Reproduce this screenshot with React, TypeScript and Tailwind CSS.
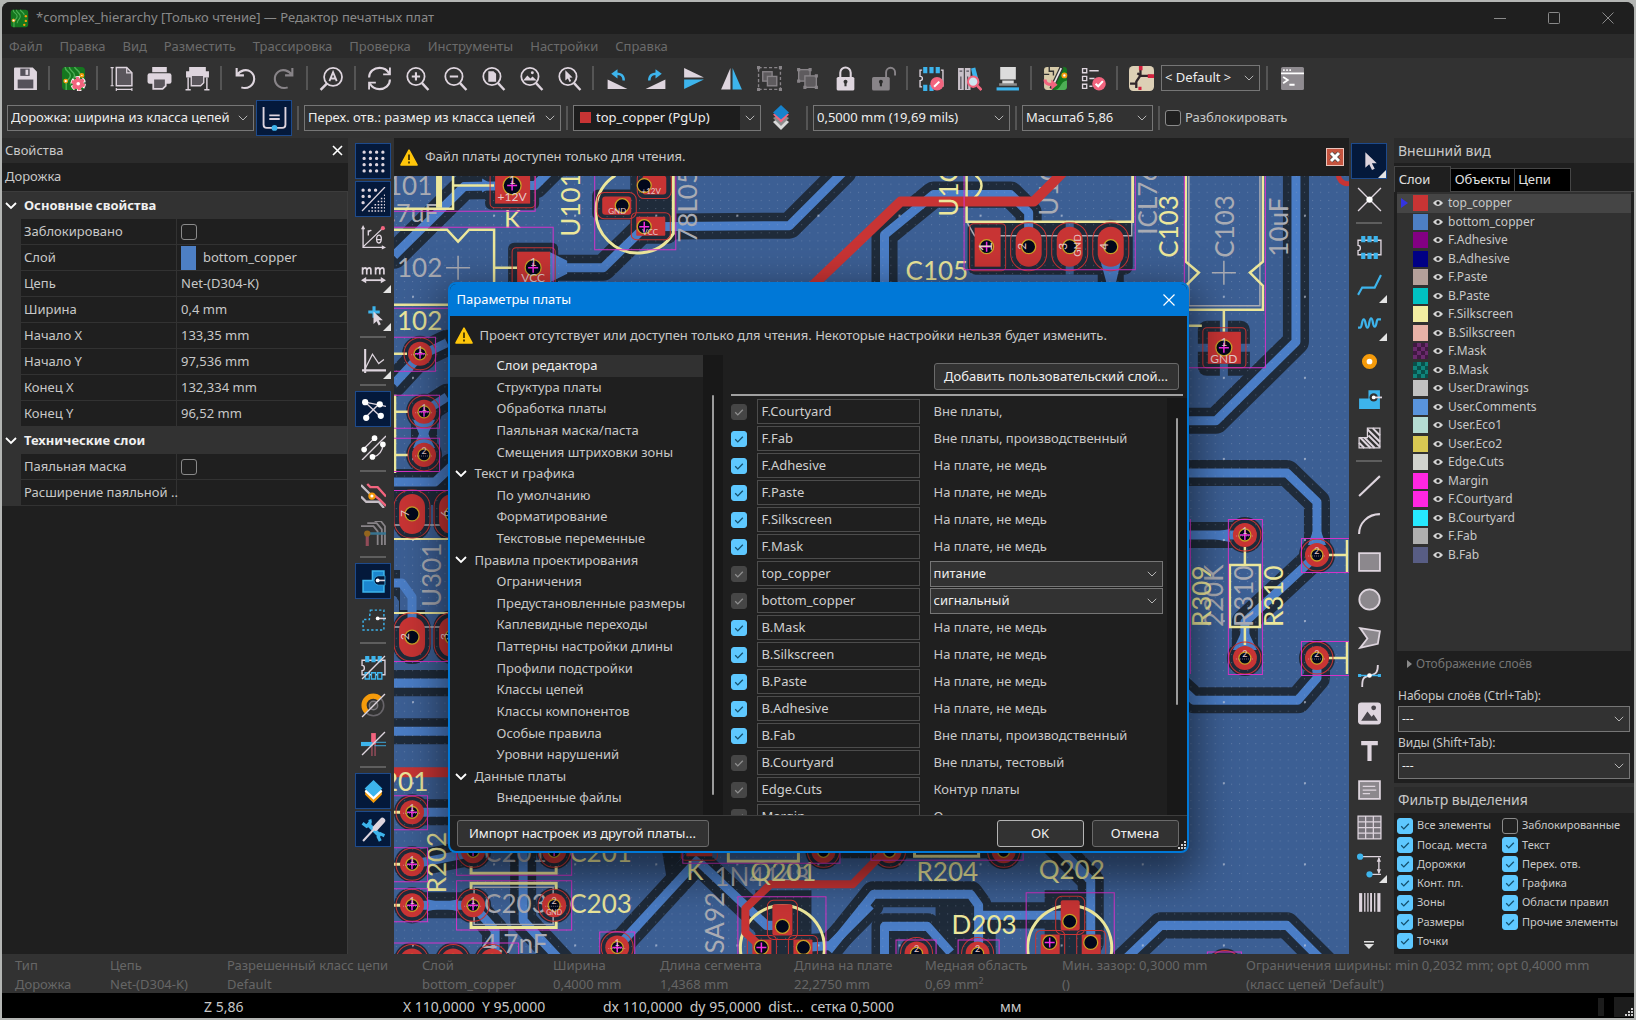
import { useId } from "react";
import type { ReactNode } from "react";

const LIGHT = "#ded5de";
const BLUE = "#3db4ec";
const PINK = "#f2647e";
const ORANGE = "#f59b0b";

/* ---------- controls ---------- */

const Check = ({ label, on, disabled, className = "", hideLabel }: {
  label: string; on?: boolean; disabled?: boolean; className?: string; hideLabel?: boolean;
}) => {
  const id = useId();
  return (
    <span className={`flex items-center gap-1 ${className}`}>
      <span className="relative block h-4 w-4 shrink-0">
        <input
          id={id}
          type="checkbox"
          defaultChecked={on}
          disabled={disabled}
          aria-label={hideLabel ? label : undefined}
          className="block h-4 w-4 appearance-none rounded-[3px] border border-[#8a8a8a] bg-[#202020] checked:border-[#5ec8ff] checked:bg-[#5ec8ff] disabled:border-[#464646] disabled:bg-[#464646]"
        />
        {on && (
          <svg viewBox="0 0 16 16" className="pointer-events-none absolute inset-0 h-4 w-4" fill="none" stroke={disabled ? "#8f8f8f" : "#14506e"} strokeWidth="1.3">
            <path d="M4.2 8.3l2.6 2.6 5-5.2" />
          </svg>
        )}
      </span>
      {!hideLabel && <label htmlFor={id} className="whitespace-nowrap">{label}</label>}
    </span>
  );
};

const Select = ({ value, label, className = "", dark }: { value: string; label: string; className?: string; dark?: boolean }) => (
  <span className={`relative block h-[26px] shrink-0 border border-[#767676] ${className}`}>
    <select aria-label={label} className={`block h-full w-full appearance-none text-[#eeeeee] outline-none ${dark ? "bg-[#1d1d1d] pl-[22px]" : "bg-[#323232] pl-[3px]"}`}>
      <option>{value}</option>
    </select>
    {dark && <i className="pointer-events-none absolute top-[6px] left-[6px] h-[11px] w-[11px] bg-[#c83434]" />}
    <span className={`pointer-events-none absolute inset-y-0 right-0 flex w-[20px] items-center justify-center ${dark ? "bg-[#323232]" : ""}`}>
      <svg width="10" height="6" viewBox="0 0 10 6" fill="none" stroke="#b5b5b5"><path d="M.8.8L5 5 9.2.8" /></svg>
    </span>
  </span>
);

const Tool = ({ name, active, corner, children, dim }: { name: string; active?: boolean; corner?: boolean; dim?: boolean; children: ReactNode }) => (
  <button
    type="button"
    aria-label={name}
    className={`relative flex h-9 w-9 shrink-0 items-center justify-center ${active ? "border border-[#1d4a8c] bg-[#04193b]" : ""}`}
  >
    <svg width="25" height="25" viewBox="0 0 24 24" fill="none" stroke={LIGHT} strokeWidth="1.7" opacity={dim ? 0.5 : 1}>{children}</svg>
    {corner && <svg width="8" height="8" viewBox="0 0 8 8" className="absolute right-0 bottom-0" fill="#e4e4e4"><path d="M8 0v8H0z" /></svg>}
  </button>
);

const VSep = ({ className = "" }: { className?: string }) => <i className={`h-6 w-[2px] shrink-0 bg-[#555] ${className}`} />;
const HSep = () => <i className="my-[3px] h-[2px] w-[26px] shrink-0 bg-[#5e5e5e]" />;

const Warn = () => (
  <svg width="18" height="17" viewBox="0 0 18 17" className="shrink-0">
    <path d="M9 1.2L17 16H1z" fill="#ffc60a" stroke="#ffc60a" strokeWidth="1.6" strokeLinejoin="round" />
    <path d="M9 5.6v5.4M9 12.6v1.8" stroke="#3b2d00" strokeWidth="1.7" />
  </svg>
);

/* ---------- toolbars ---------- */

const Lens = ({ children }: { children?: ReactNode }) => (
  <>
    <circle cx="10.5" cy="10" r="8.3" />
    <path d="M16.4 16.4L22.5 23" strokeWidth="2.3" />
    {children}
  </>
);

const BoardArt = () => (
  <>
    <rect x="1" y="1" width="22" height="22" rx="3.5" fill="#15771f" stroke="none" />
    <path d="M4 1c0 5 5 4 5 8s-4 4-4 8v6M8 1c0 4 5 4 5 8s-4 5-4 9M13 1c1 3 5 3 5 7" stroke="#4dae55" strokeWidth="1.4" />
    <circle cx="4.5" cy="14.5" r="1.7" fill="#fff" stroke={ORANGE} strokeWidth="1.2" />
  </>
);

const Badge = ({ d }: { d: string }) => (
  <>
    <circle cx="17.3" cy="17" r="6.5" fill={PINK} stroke="none" />
    <path d={d} stroke="#fff" strokeWidth="2" />
  </>
);

const MainToolbar = () => (
  <div className="flex h-10 shrink-0 items-center gap-[2px] bg-[#323232] pl-[5px]">
    <Tool name="Сохранить">
      <path d="M2 1.5h17l4 4V23H1V2.5a1 1 0 0 1 1-1z" fill={LIGHT} stroke="none" />
      <rect x="7" y="2.5" width="9" height="7" fill="#55515a" stroke="none" /><rect x="12" y="3.5" width="2.6" height="5" fill={LIGHT} stroke="none" />
      <rect x="4.5" y="13" width="15" height="8.5" fill="#55515a" stroke="none" />
    </Tool>
    <VSep className="mx-[3px]" />
    <Tool name="Параметры платы">
      <BoardArt />
      <circle cx="20" cy="9" r="1.5" fill="#fff" stroke={ORANGE} />
      <circle cx="16.5" cy="17" r="5.3" fill={PINK} stroke="#fff" strokeWidth="4.2" strokeDasharray="3.6 1.95" />
      <circle cx="16.5" cy="17" r="5.3" fill={PINK} stroke={PINK} strokeWidth="2.6" strokeDasharray="2.8 2.75" />
      <circle cx="16.5" cy="17" r="2.6" fill="#fff" stroke={PINK} />
    </Tool>
    <VSep className="mx-[3px]" />
    <Tool name="Параметры страницы">
      <path d="M7 1.5h10l5 5V19H7z" fill="#5a565c" strokeWidth="1.4" /><path d="M17 1.5v5h5" strokeWidth="1.2" />
      <path d="M3 1.5V19M1.5 1.5h3M1.5 19h3M7 22.5h15M7 21v3M22 21v3" strokeWidth="1.1" />
    </Tool>
    <Tool name="Печать">
      <path d="M5 1h14v5H5z" fill={LIGHT} stroke="none" />
      <rect x="0.5" y="7" width="23" height="10" rx="2" fill={LIGHT} stroke="none" />
      <path d="M6 12h12v7l-3 3H6z" fill="#5a565c" />
    </Tool>
    <Tool name="Плоттер">
      <path d="M4 1h16v4H4zM1 5h22v6H1z" fill={LIGHT} stroke="none" />
      <path d="M6 9h12v7l-3 3H6z" fill="#5a565c" strokeWidth="1.3" /><path d="M3 11v12M21 11v12M.5 22.8h5M18.5 22.8h5" strokeWidth="1.4" />
    </Tool>
    <VSep className="mx-[3px]" />
    <Tool name="Отменить"><path d="M3.5 2v7h7M4 8.5C7 4 13 2.5 17 5.5c5 4 4 11-.5 14-3 2-6 2-8.5 1" strokeWidth="2" /></Tool>
    <Tool name="Повторить" dim><path d="M20.5 2v7h-7M20 8.5C17 4 11 2.5 7 5.5c-5 4-4 11 .5 14 3 2 6 2 8.5 1" strokeWidth="2" /></Tool>
    <VSep className="mx-[3px]" />
    <Tool name="Найти">
      <circle cx="13.5" cy="10.5" r="8.6" /><path d="M7.5 17L1.5 23" strokeWidth="2.3" />
      <path d="M10 14.5l3.5-8.5 3.5 8.5M11.2 12h4.6" strokeWidth="1.8" />
    </Tool>
    <VSep className="mx-[3px]" />
    <Tool name="Обновить">
      <path d="M2 11C2 5 7 1.8 12 1.8c4 0 7.5 2 9.3 5.5M22 13c0 6-5 9.2-10 9.2-4 0-7.5-2-9.3-5.5" strokeWidth="2" />
      <path d="M22 1.5v6.5h-6.5M2 22.5V16h6.5" strokeWidth="1.8" />
    </Tool>
    <Tool name="Приблизить"><Lens><path d="M10.5 6v8M6.5 10h8" strokeWidth="2" /></Lens></Tool>
    <Tool name="Отдалить"><Lens><path d="M6.5 10h8" strokeWidth="2" /></Lens></Tool>
    <Tool name="По размеру страницы"><Lens><path d="M7 5h5l2.5 2.5V15H7z" fill={LIGHT} stroke="none" /></Lens></Tool>
    <Tool name="По объектам"><Lens><path d="M4 14l4-5 3 3 2-2 4 4z" fill={LIGHT} stroke="none" /><circle cx="12.8" cy="6.5" r="1.4" fill={LIGHT} stroke="none" /></Lens></Tool>
    <Tool name="По выделению"><Lens><path d="M8 4v10l2.4-2 1.6 3.3 1.6-.8-1.6-3.2 3-.3z" fill={LIGHT} stroke="none" /></Lens></Tool>
    <VSep className="mx-[3px]" />
    <Tool name="Повернуть влево">
      <path d="M2.5 13v9h19z" fill={LIGHT} stroke="none" /><path d="M18 14c0-5-3-7-8-6.5" stroke={BLUE} strokeWidth="2.4" /><path d="M12 3v9L6 7.5z" fill={BLUE} stroke="none" />
    </Tool>
    <Tool name="Повернуть вправо">
      <path d="M21.5 13v9h-19z" fill={LIGHT} stroke="none" /><path d="M6 14c0-5 3-7 8-6.5" stroke={BLUE} strokeWidth="2.4" /><path d="M12 3v9l6-4.5z" fill={BLUE} stroke="none" />
    </Tool>
    <Tool name="Отразить по вертикали"><path d="M3 2l19 9H3z" fill={LIGHT} stroke="none" /><path d="M3 22l19-9H3z" fill={BLUE} stroke="none" /></Tool>
    <Tool name="Отразить по горизонтали"><path d="M2 22.5L11 2v20.5z" fill={LIGHT} stroke="none" /><path d="M22 22.5L13 2v20.5z" fill={BLUE} stroke="none" /></Tool>
    <Tool name="Сгруппировать" dim>
      <rect x="1.5" y="1.5" width="21" height="21" strokeDasharray="3 2" strokeWidth="1.3" />
      <rect x="5.5" y="5.5" width="9" height="9" fill="#8a858a" strokeWidth="1.3" /><rect x="10" y="10" width="9" height="9" fill="#8a858a" strokeWidth="1.3" />
      <path d="M0 0h3v3H0zM21 0h3v3h-3zM0 21h3v3H0zM21 21h3v3h-3z" fill={LIGHT} stroke="none" />
    </Tool>
    <Tool name="Разгруппировать" dim>
      <rect x="3.5" y="3.5" width="11" height="11" fill="#8a858a" strokeWidth="1.3" /><rect x="9.5" y="9.5" width="11" height="11" fill="#8a858a" strokeWidth="1.3" />
      <path d="M2 2h3v3H2zM13 2h3v3h-3zM2 13h3v3H2zM19 8h3v3h-3zM8 19h3v3H8zM19 19h3v3h-3z" fill={LIGHT} stroke="none" />
    </Tool>
    <Tool name="Заблокировать">
      <path d="M7 11V6.5a5 5 0 0 1 10 0V11" strokeWidth="2" /><rect x="3.5" y="10.5" width="17" height="13" rx="1.5" fill={LIGHT} stroke="none" />
      <path d="M12 14.5v5" stroke="#333" strokeWidth="2" /><circle cx="12" cy="15" r="1.9" fill="#333" stroke="none" />
    </Tool>
    <Tool name="Разблокировать" dim>
      <path d="M14.5 11V6a4.3 4.3 0 0 1 8.6 0v3" strokeWidth="1.8" /><rect x="1" y="10.5" width="17" height="13" rx="1.5" fill={LIGHT} stroke="none" />
      <path d="M9.5 14.5v5" stroke="#222" strokeWidth="2" /><circle cx="9.5" cy="15" r="1.9" fill="#222" stroke="none" />
    </Tool>
    <VSep className="mx-[3px]" />
    <Tool name="Редактор посадочных мест">
      <path d="M3 4H1v6c3 0 3 4 0 4v6h2M21 4h2v16" strokeWidth="1.3" /><path d="M4 1h4v6H4zM10 1h4v6h-4zM16 1h4v6h-4zM4 18h4v6H4zM10 18h4v6h-4z" fill={BLUE} stroke="none" />
      <Badge d="M14.5 20l5-5" />
    </Tool>
    <Tool name="Просмотр библиотек">
      <path d="M1 2h5.5v21H1zM7.5 2H13v21H7.5z" fill="#c9c1c9" stroke="none" /><path d="M2.5 5h2.5M9 5h2.5M3.7 10v12M10.2 10v12" stroke="#55515a" strokeWidth="1.2" />
      <path d="M13.5 2.5l4-1 4 15h-5z" fill={BLUE} stroke="none" /><circle cx="15.5" cy="15" r="5" fill="#cfe6f0" stroke={PINK} strokeWidth="2" /><path d="M19.5 19l4 4" stroke={PINK} strokeWidth="2.6" />
    </Tool>
    <Tool name="3D-просмотр">
      <path d="M5 1h15v12H5zM7 14h11v4H7z" fill="#dcdcdc" stroke="none" /><path d="M4 16.5h17v2.5H4z" fill="#8d8d8d" stroke="none" /><rect x="1.5" y="20.5" width="21.5" height="3" fill={BLUE} stroke="none" />
    </Tool>
    <VSep className="mx-[3px]" />
    <Tool name="Обновить плату из схемы">
      <path d="M16 1H4a3 3 0 0 0-3 3v16a3 3 0 0 0 3 3h5z" fill="#d7cba9" stroke="none" /><path d="M6 1v4h4v4M1 8h5" stroke="#333" strokeWidth="1.3" />
      <path d="M19 1h1a3 3 0 0 1 3 3v16a3 3 0 0 1-3 3H9z" fill="#15771f" stroke="none" />
      <path d="M12 23c6-1 4-8 11-9v6a3 3 0 0 1-3 3z" fill="#4dae55" stroke="none" />
      <path d="M18 1L8 22" stroke="#333" strokeWidth="4" /><path d="M17.5 2L9 20" stroke="#e8e8e8" strokeWidth="1.6" />
      <circle cx="20.5" cy="9" r="2" fill="#fff" stroke={ORANGE} /><path d="M2 13c0 4 3 5 7 4.5" stroke={PINK} strokeWidth="3" /><path d="M8 13v10l6-5z" fill={PINK} stroke="none" />
    </Tool>
    <Tool name="Проверка правил">
      <path d="M1.5 2.5h4v4h-4zM1.5 10h4v4h-4zM1.5 17.5h4v4h-4z" strokeWidth="1.3" /><path d="M8 4.5h9M8 12h5M8 19.5h3" strokeWidth="1.5" />
      <Badge d="M14 17l2.5 2.5 4.5-5" />
    </Tool>
    <VSep className="mx-[3px]" />
    <Tool name="Инспектор цепей">
      <rect x="0" y="0" width="24" height="24" rx="4" fill="#ddd0b6" stroke="none" />
      <path d="M11 3v6l-4 6v6M10 9.5h12M1 17h6M11 9l-3-2" stroke="#30262b" strokeWidth="2.2" /><path d="M9.5 0h3.5v4H9.5zM18 8h6v3.5h-6zM9 20h3v3H9z" fill="#d4213f" stroke="none" />
    </Tool>
    <Select label="Профиль" value="< Default >" className="w-[99px]" />
    <VSep className="mx-[4px]" />
    <Tool name="Консоль">
      <rect x="1" y="1" width="22" height="22" rx="1.5" fill="#8f8b90" stroke="none" /><path d="M1 7h22" stroke="#fff" /><path d="M3 4h1.5M6 4h1.5M9 4h1.5" stroke="#fff" strokeWidth="1.6" />
      <path d="M3 10.5l4.5 3L3 16.5M9 18h5" stroke="#fff" strokeWidth="1.7" />
    </Tool>
  </div>
);

const AuxToolbar = () => (
  <div className="flex h-10 shrink-0 items-center bg-[#323232] pl-[5px]">
    <Select label="Ширина дорожки" value="Дорожка: ширина из класса цепей" className="w-[247px]" />
    <span className="ml-[2px]">
      <Tool name="Автоширина" active>
        <path d="M1.5 1v17a3 3 0 0 0 3 3h15a3 3 0 0 0 3-3V1M7 9h10M7 12.5h10" strokeWidth="1.8" />
        <circle cx="12" cy="21" r="2.8" fill={BLUE} stroke="none" />
      </Tool>
    </span>
    <VSep className="mx-[5px]" />
    <Select label="Переходное отверстие" value="Перех. отв.: размер из класса цепей" className="w-[257px]" />
    <VSep className="mx-[5px]" />
    <Select label="Слой" value="top_copper (PgUp)" dark className="w-[188px]" />
    <button type="button" aria-label="Пара слоёв" className="mx-[10px] flex h-9 w-5 items-center justify-center">
      <svg width="18" height="26" viewBox="0 0 18 26" className="shrink-0">
        <path d="M9 25l8-8-4-3H5l-4 3z" fill="#d9d9d9" /><path d="M9 21l8-8-4-2H5l-4 2z" fill="#8c8c8c" />
        <path d="M9 17.5l8-8-4-2H5l-4 2z" fill={PINK} /><path d="M9 0l8 7.5-8 7-8-7z" fill="#1783cc" />
      </svg>
    </button>
    <VSep className="mx-[5px]" />
    <Select label="Сетка" value="0,5000 mm (19,69 mils)" className="w-[197px]" />
    <VSep className="mx-[5px]" />
    <Select label="Масштаб" value="Масштаб 5,86" className="w-[131px]" />
    <VSep className="mx-[5px]" />
    <Check label="Разблокировать" className="text-[#c9c9c9]" />
  </div>
);

const LeftToolbar = () => (
  <nav className="flex w-[46px] shrink-0 flex-col items-center gap-[2px] bg-[#323232] pt-[5px] pl-1">
    <Tool name="Показать сетку" active>
      {[3, 9, 15, 21].map((y) => <path key={y} d={`M3 ${y}h.01M9 ${y}h.01M15 ${y}h.01M21 ${y}h.01`} strokeWidth="3.2" strokeLinecap="round" />)}
    </Tool>
    <Tool name="Замена сетки" active>
      <path d="M2 3h.01M8 3h.01M14 3h.01M2 9h.01M8 9h.01M2 15h.01" strokeWidth="3.2" strokeLinecap="round" />
      <path d="M1 23L23 0" strokeWidth="1.2" />
      {[8, 11, 14, 17, 20, 23].map((y, i) => <path key={y} d={`M${22 - i * 3} ${y}H23`} strokeWidth="1.5" strokeDasharray="1.5 1.5" />)}
    </Tool>
    <Tool name="Полярные координаты">
      <path d="M2 2v19.5h20M2 21L21 3" strokeWidth="1.3" /><path d="M2 0l2 4H0zM24 21.5l-4-2v4z" fill={LIGHT} stroke="none" /><circle cx="21" cy="3" r="2" fill={PINK} stroke="none" />
      <path d="M7 10V5M7 7c1-1.5 2-2 3-1.5M15 13.5c0-5 5-5 4.5 0s-4.5 5-4.5 0zM15 14h4.5" strokeWidth="1.3" />
    </Tool>
    <Tool name="Миллиметры" corner>
      <path d="M1.5 11V4M1.5 7c1-3 4-3 4 0v4M5.5 7c1-3 4-3 4 0v4M14 11V4M14 7c1-3 4-3 4 0v4M18 7c1-3 4-3 4 0v4" strokeWidth="1.6" />
      <path d="M3 16.5h18" /><path d="M0 16.5l5-3v6zM24 16.5l-5-3v6z" fill={LIGHT} stroke="none" />
    </Tool>
    <Tool name="Курсор" corner>
      <path d="M12.5 5v11M7 10.5h11" stroke={BLUE} strokeWidth="3" /><path d="M12 10v12l3-2.6 2 4 2-1-2-4h4z" fill={LIGHT} stroke="none" />
    </Tool>
    <HSep />
    <Tool name="График" corner><path d="M4 0v23M1 20.5h23" strokeWidth="2" /><path d="M4 19l7-14 6 9 5-4" strokeWidth="1.2" /></Tool>
    <HSep />
    <Tool name="Связи" active>
      <path d="M4 5l20 4M4 20L18 6M4 5l15 14" strokeWidth="1.3" />
      {[[4, 5], [18, 7], [5, 20], [19, 18]].map(([x, y]) => <circle key={`${x}-${y}`} cx={x} cy={y} r="3" fill="#fff" stroke="none" />)}
    </Tool>
    <Tool name="Изогнутые связи">
      <path d="M1 24L24 1M3 13L13 3M21 9c0 6-4 11-9 12" strokeWidth="1.3" />
      {[[3, 14], [13, 3], [21, 9], [11, 21]].map(([x, y]) => <circle key={`${x}-${y}`} cx={x} cy={y} r="2.7" fill="#fff" stroke="none" />)}
    </Tool>
    <HSep />
    <Tool name="Подсветка цепей">
      <path d="M0 2l9 9M0 13l5 5h12l5 6" strokeWidth="2.2" stroke="#c5bec5" /><path d="M6 1l3 3h7l8 9M13 12l5 4 6 6" stroke={PINK} strokeWidth="2.2" />
      <circle cx="10.5" cy="12.5" r="2.5" fill="#fff" stroke={ORANGE} strokeWidth="2" />
    </Tool>
    <Tool name="Локальные связи" dim>
      <path d="M0 5h12l4 5v13M6 2h9l5 6v15M13 0h6l4 5v18" strokeWidth="1.7" /><path d="M6 12h18" stroke={BLUE} strokeWidth="2.4" /><path d="M6 12v12" stroke={PINK} strokeWidth="3" /><circle cx="6" cy="12" r="3" fill={ORANGE} stroke="none" />
    </Tool>
    <HSep />
    <Tool name="Залитые зоны" active>
      <path d="M11 2h11v20H2V11h9z" fill="#1b86cf" stroke={BLUE} strokeWidth="1.5" /><path d="M23 7.5h-6a4.5 4.5 0 0 0 0 9h6z" fill="#04193b" stroke={BLUE} strokeWidth=".8" transform="translate(0 -1)" /><path d="M16 11h7" strokeWidth="1.5" /><circle cx="16" cy="11" r="1.8" fill="#fff" stroke="none" />
    </Tool>
    <Tool name="Контуры зон">
      <path d="M9 3h13v19H2V12h6z" stroke={BLUE} strokeWidth="1.4" strokeDasharray="2.2 2" /><path d="M16 11h8" strokeWidth="1.5" /><circle cx="16" cy="11" r="1.8" fill="#fff" stroke="none" />
    </Tool>
    <HSep />
    <Tool name="Контуры посадочных мест">
      <path d="M1 5h22v14H1v-4c3 0 3-5 0-5z" strokeWidth="1.3" /><path d="M4 1h4v6H4zM10 1h4v6h-4zM16 1h4v6h-4z" fill={BLUE} stroke="none" /><path d="M4 17h4v6H4zM10 17h4v6h-4zM16 17h4v6h-4z" stroke={BLUE} strokeWidth="1.3" fill="#323232" /><path d="M1 23L23 1" strokeWidth="1.3" />
    </Tool>
    <Tool name="Контуры отверстий">
      <circle cx="12" cy="12" r="9.8" stroke="#68656a" strokeWidth="1.5" /><path d="M5.5 18A8 8 0 0 1 18 5.5" stroke={ORANGE} strokeWidth="5" /><circle cx="12" cy="12" r="4" stroke="#77747a" fill="#444" strokeWidth="1.4" /><path d="M1 23L23 1" strokeWidth="1.3" />
    </Tool>
    <Tool name="Контуры дорожек">
      <path d="M12 2v11" stroke={PINK} strokeWidth="4.5" /><path d="M10.5 13v11M13.5 13v11" stroke={PINK} strokeWidth="1.2" opacity=".6" /><path d="M0 12.5h11" stroke={BLUE} strokeWidth="4" /><path d="M13 11h11M13 14h11" stroke={BLUE} strokeWidth="1.2" opacity=".7" /><path d="M1 23L23 1" strokeWidth="1.3" />
    </Tool>
    <HSep />
    <Tool name="Диспетчер слоёв" active>
      <path d="M12 23l8-8V11H4v4z" fill={ORANGE} stroke="none" /><path d="M12 20l8.5-8-2-3h-13l-2 3z" fill="#fff" stroke="none" /><path d="M12 1l8.5 8-8.5 8-8.5-8z" fill={BLUE} stroke="none" />
    </Tool>
    <Tool name="Свойства" active>
      <path d="M6 6l12 12" stroke={BLUE} strokeWidth="4" /><path d="M8.5 2.5c1 3 0 5-3 6.5L1.5 6" stroke={BLUE} strokeWidth="3" /><path d="M22.5 18l-4-2-2 3 2 4" stroke={BLUE} strokeWidth="3" /><path d="M2 23L14 10" strokeWidth="2" /><path d="M14 10.5L20.5 3.5" strokeWidth="5.5" strokeLinecap="round" />
    </Tool>
  </nav>
);

const RightToolbar = () => (
  <nav className="flex w-[45px] shrink-0 flex-col items-center gap-[2px] bg-[#323232] pt-[5px] pr-[5px]">
    <Tool name="Выбор" active corner><path d="M8 3v15l3.7-3.3 2.7 5.5 2.6-1.3-2.7-5.3h4.7z" fill={LIGHT} stroke="none" /></Tool>
    <Tool name="Связи платы"><path d="M1 1l11 11L23 1M1 23l11-11 11 11" strokeWidth="1.3" /><circle cx="12" cy="12" r="3" fill="#fff" stroke="none" /></Tool>
    <HSep />
    <Tool name="Посадочное место">
      <path d="M1 5h22v14H1v-4c3 0 3-5 0-5z" strokeWidth="1.3" /><path d="M4 1h4v6H4zM10 1h4v6h-4zM16 1h4v6h-4zM4 17h4v6H4zM10 17h4v6h-4zM16 17h4v6h-4z" fill={BLUE} stroke="none" />
    </Tool>
    <Tool name="Трассировка" corner><path d="M1 21l4-7h12l6-12" stroke={BLUE} strokeWidth="2" /></Tool>
    <Tool name="Настройка длины" corner><path d="M1 16h2c2 0 1.5-8 3.5-8s1.500 8 3.500 8 1.500-9 3.500-9 1.500 8 3.500 8 1.500-7 3-7h3" stroke={BLUE} strokeWidth="2.2" /></Tool>
    <Tool name="Переходное отверстие"><circle cx="12" cy="12" r="5" fill="#fff" stroke={ORANGE} strokeWidth="4.5" /></Tool>
    <Tool name="Зона">
      <path d="M11 3h11v18H2V11h9z" fill={BLUE} stroke="none" /><circle cx="16" cy="10" r="4" fill="#323232" stroke="none" /><path d="M16 10h8" /><circle cx="16" cy="10" r="1.8" fill="#fff" stroke="none" />
    </Tool>
    <Tool name="Область правил">
      <path d="M10 3h12v19H2V12h8z" strokeWidth="1.2" /><path d="M10 4l12 12M11 10l11 11M3 12l10 10M7 12l10 10M2 17l5 5M15 3l7 7" strokeWidth="2" />
    </Tool>
    <HSep />
    <Tool name="Линия"><path d="M2 22L22 3" strokeWidth="2" /></Tool>
    <Tool name="Дуга"><path d="M2 22C2 12 10 3 22 3" strokeWidth="2" /></Tool>
    <Tool name="Прямоугольник"><rect x="2" y="4" width="20" height="17" fill="#8c888d" /></Tool>
    <Tool name="Окружность"><circle cx="12" cy="12" r="9.8" fill="#8c888d" /></Tool>
    <Tool name="Полигон"><path d="M3 3l19 3-2 12-17 4 7-9z" fill="#8c888d" /></Tool>
    <Tool name="Кривая Безье"><path d="M5 23c0-6 0-10 7-11s8-4 8-10" strokeWidth="1.8" /><path d="M2 12h20" stroke={BLUE} strokeWidth="1.4" /><path d="M1 10.5h3v3H1zM20 10.5h3v3h-3z" fill={BLUE} stroke="none" /><circle cx="12" cy="12" r="2.2" fill="#fff" stroke="none" /></Tool>
    <Tool name="Изображение"><rect x="1" y="1.5" width="22" height="21" rx="3" fill={LIGHT} stroke="none" /><path d="M4 19l6-9 4 5 2-2 4 6z" fill="#47444a" stroke="none" /><circle cx="16" cy="6.5" r="2.3" fill="#47444a" stroke="none" /></Tool>
    <Tool name="Текст"><path d="M4 4h16M12 4v17" strokeWidth="4" /></Tool>
    <Tool name="Текстовое поле"><rect x="2" y="4" width="20" height="17" fill="#8c888d" /><path d="M5.5 9h12M5.5 12.5h13M5.5 16h7" strokeWidth="1.2" /></Tool>
    <Tool name="Таблица"><rect x="1" y="1" width="22" height="22" fill="#77737a" stroke="none" /><path d="M1 1h22v22H1zM8.3 1v22M15.7 1v22M1 6.5h22M1 12h22M1 17.5h22" strokeWidth="1.2" /></Tool>
    <Tool name="Размер" corner><path d="M3 3.5h20M12 20.5h11M21 5v14" strokeWidth="1.3" /><path d="M21 3.5l2 5h-4zM21 20.5l2-5h-4z" fill={LIGHT} stroke="none" /><circle cx="3" cy="3.5" r="3" fill={BLUE} stroke="none" /><circle cx="12" cy="20.5" r="3" fill={BLUE} stroke="none" /></Tool>
    <Tool name="Штрихкод"><path d="M3.5 2v18" strokeWidth="3" /><path d="M7.5 2v18M10.5 2v18M17 2v18" strokeWidth="1.3" /><path d="M13.5 2v18" strokeWidth="1.8" /><path d="M21 2v18" strokeWidth="3" /></Tool>
    <svg width="10" height="8" viewBox="0 0 10 8" className="mt-[18px]" fill="#e0e0e0"><path d="M0 0h10v1.5H0zM0 3h10L5 8z" /></svg>
  </nav>
);

/* ---------- left panel ---------- */

const mainProps: [string, string][] = [
  ["Заблокировано", ""],
  ["Слой", "bottom_copper"],
  ["Цепь", "Net-(D304-K)"],
  ["Ширина", "0,4 mm"],
  ["Начало X", "133,35 mm"],
  ["Начало Y", "97,536 mm"],
  ["Конец X", "132,334 mm"],
  ["Конец Y", "96,52 mm"],
];
const techProps: [string, string][] = [["Паяльная маска", ""], ["Расширение паяльной ..", " "]];

const PropGroup = ({ title, rows }: { title: string; rows: [string, string][] }) => (
  <section>
    <h3 className="flex h-[27px] items-center gap-[7px] bg-[#323232] pl-[3px] font-bold text-[#f0f0f0]">
      <svg width="12" height="8" viewBox="0 0 12 8" fill="none" stroke="#fff" strokeWidth="1.8"><path d="M1 1l5 5 5-5" /></svg>
      {title}
    </h3>
    <table className="w-full table-fixed border-separate border-spacing-0">
      <tbody>
        {rows.map(([name, value]) => (
          <tr key={name} className="h-[26px]">
            <td className="w-[19px] bg-[#323232] p-0" />
            <th scope="row" className="w-[156px] border-r border-b border-[#323232] p-0 pl-[3px] text-left font-normal whitespace-nowrap">{name}</th>
            <td className="border-b border-[#323232] p-0 pl-1">
              {value === "" ? (
                <Check label={name} hideLabel />
              ) : name === "Слой" ? (
                <span className="flex items-center gap-[7px]"><i className="h-6 w-[15px] bg-[#4d7fc4]" />{value}</span>
              ) : value}
            </td>
          </tr>
        ))}
      </tbody>
    </table>
  </section>
);

const PropertiesPanel = () => (
  <aside className="flex w-[346px] shrink-0 flex-col bg-[#1f1f1f]">
    <header className="flex h-[25px] items-center justify-between bg-[#2b2b2b] pr-[5px] pl-[3px]">
      Свойства
      <button type="button" aria-label="Закрыть панель"><svg width="11" height="11" viewBox="0 0 11 11" stroke="#fff" strokeWidth="1.6"><path d="M1 1l9 9M10 1l-9 9" /></svg></button>
    </header>
    <p className="flex h-7 items-center pl-[3px]">Дорожка</p>
    <div className="flex-1 border-t border-r border-[#3c3c3c]">
      <PropGroup title="Основные свойства" rows={mainProps} />
      <PropGroup title="Технические слои" rows={techProps} />
    </div>
  </aside>
);

/* ---------- right panel ---------- */

const layers = [
  ["top_copper", "#c83434"], ["bottom_copper", "#4d7fc4"], ["F.Adhesive", "#840084"], ["B.Adhesive", "#000084"],
  ["F.Paste", "#b4a09a"], ["B.Paste", "#00c2c2"], ["F.Silkscreen", "#f2eda1"], ["B.Silkscreen", "#e8b2a7"],
  ["F.Mask", "#6b2a6e"], ["B.Mask", "#10847c"], ["User.Drawings", "#c2c2c2"], ["User.Comments", "#5994dc"],
  ["User.Eco1", "#b4dbd2"], ["User.Eco2", "#d8c852"], ["Edge.Cuts", "#d0d2cd"], ["Margin", "#ff26e2"],
  ["F.Courtyard", "#ff26e2"], ["B.Courtyard", "#26e9ff"], ["F.Fab", "#afafaf"], ["B.Fab", "#585d84"],
];

const filters: [string, boolean][] = [
  ["Все элементы", true], ["Заблокированные", false], ["Посад. места", true], ["Текст", true], ["Дорожки", true],
  ["Перех. отв.", true], ["Конт. пл.", true], ["Графика", true], ["Зоны", true], ["Области правил", true],
  ["Размеры", true], ["Прочие элементы", true], ["Точки", true],
];

const AppearancePanel = () => (
  <aside className="flex w-[240px] shrink-0 flex-col bg-[#1f1f1f] text-xs">
    <header className="flex h-[25px] shrink-0 items-center bg-[#2b2b2b] pl-1 text-sm">Внешний вид</header>
    <div role="tablist" className="mt-[3px] flex h-[26px] shrink-0 items-end text-[13px] text-[#e0e0e0]">
      <button type="button" role="tab" aria-selected="true" className="h-[26px] w-[57px] border border-b-0 border-[#454545] pr-4">Слои</button>
      <button type="button" role="tab" className="h-6 w-[64px] border border-l-0 border-[#454545] bg-black">Объекты</button>
      <button type="button" role="tab" className="h-6 w-[56px] border border-l-0 border-[#454545] bg-black pr-4">Цепи</button>
      <i className="flex-1 border-b border-[#454545]" />
    </div>
    <div className="mr-[3px] ml-[3px] h-[459px] shrink-0 bg-[#313131] pt-[2px]">
      <ul className="grid h-[370px] auto-rows-fr">
        {layers.map(([name, color], i) => (
          <li key={name} className={`flex items-center leading-4 ${i === 0 ? "bg-[#454545]" : ""}`}>
            <span className="w-4 pl-1">{i === 0 && <svg width="7" height="10" viewBox="0 0 7 10" fill="#3434e0"><path d="M0 0l7 5-7 5z" /></svg>}</span>
            <svg width="15" height="16" viewBox="0 0 15 16">
              <rect width="15" height="16" fill={color} />
              {name.endsWith("Mask") && <path d="M0 0h4v4H0zM8 0h4v4H8zM4 4h4v4H4zM12 4h4v4h-4zM0 8h4v4H0zM8 8h4v4H8zM4 12h4v4H4zM12 12h4v4h-4z" fill="#000" opacity=".4" />}
            </svg>
            <svg width="10" height="8" viewBox="0 0 10 8" className="mx-[5px]"><path d="M0 4C3 0 7 0 10 4 7 8 3 8 0 4z" fill="#d5d5d5" /><circle cx="5" cy="4" r="1.7" fill="#222" /></svg>
            {name}
          </li>
        ))}
      </ul>
    </div>
    <button type="button" className="flex h-[26px] shrink-0 items-center gap-1 pl-[13px] text-[#757575]">
      <svg width="5" height="8" viewBox="0 0 5 8" fill="#8a8a8a"><path d="M0 0l5 4-5 4z" /></svg>Отображение слоёв
    </button>
    <div className="mt-[10px] flex shrink-0 flex-col pr-1 pl-1">
      <p className="h-[19px] leading-[18px]">Наборы слоёв (Ctrl+Tab):</p>
      <Select label="Наборы слоёв" value="---" />
      <p className="mt-[2px] h-[19px] leading-[18px]">Виды (Shift+Tab):</p>
      <Select label="Виды" value="---" />
    </div>
    <header className="mt-1 flex h-[30px] shrink-0 items-center border-t-4 border-[#323232] bg-[#2b2b2b] pl-1 text-sm">Фильтр выделения</header>
    <div className="mt-[3px] grid h-[135px] shrink-0 auto-rows-fr grid-cols-[105px_1fr] items-center pl-[3px] text-[11px]">
      {filters.map(([label, on]) => <Check key={label} label={label} on={on} />)}
    </div>
  </aside>
);

/* ---------- board ---------- */

const YEL = "#ece79b";
const FAB = "#a9abb3";
const MAG = "#d433c8";
const DARK = "#1f2b3a";
const COPPER = "#4a7dc6";
const RED = "#c83434";
const NUM = "#e6c9c9";

const tracks = [
  "394,256 464,187 512,186 535,186 565,156", "533,268 603,268 644,228", "644,227 789,226 843,172",
  "394,384 420,356 447,343", "424,412 447,397", "424,412 424,455", "394,482 435,482 452,466",
  "394,583 402,583 412,597 412,637", "394,683 452,683", "394,731 452,731", "412,864 473,852", "412,812 452,812",
  "412,905 473,905 495,930 495,960", "523,845 523,920 562,962", "617,947 699,858", "699,862 766,925 782,925", "803,947 830,945 870,905",
  "828,950 873,894 970,894 978,905 978,960", "978,915 1060,915 1069,921", "884,960 884,926 927,926 950,952",
  "1040,830 1090,880 1090,942", "1118,965 1160,925 1286,925 1326,965",
  "884,290 884,235 933,195 1010,195 1028,213 1028,247", "1110,247 1110,290", "1295,170 1295,342 1215,421 1185,421",
  "1185,473 1286,473 1316,502 1316,555 1244,622 1244,658", "1185,535 1244,535", "1316,658 1316,678 1297,700 1193,700 1180,688",
];

const Hole = ({ x, y, r = 7, cross }: { x: number; y: number; r?: number; cross?: boolean }) => (
  <g>
    <circle cx={x} cy={y} r={r} fill="#02081c" stroke="#c9a227" strokeWidth="1.3" />
    {cross && <path d={`M${x - 5} ${y}h10M${x} ${y - 5}v10`} stroke="#f02fe0" strokeWidth="1.5" />}
  </g>
);

const Pad = ({ x, y, n, r = 12, cross }: { x: number; y: number; n?: string; r?: number; cross?: boolean }) => (
  <g>
    <circle cx={x} cy={y} r={r} fill={RED} />
    <circle cx={x} cy={y} r={r + 4} fill="none" stroke={RED} strokeWidth="1" />
    <Hole x={x} y={y} r={6} cross={cross} />
    {n && <text x={x} y={y - 1} fontSize="9" fill={NUM} textAnchor="middle">{n}</text>}
    <path d={`M${x - 9} ${y + 1}h18`} stroke={NUM} strokeWidth="1" strokeDasharray="1 1" opacity=".5" />
  </g>
);

const Block = ({ x, y, w, h, rx = 0 }: { x: number; y: number; w: number; h: number; rx?: number }) => (
  <g>
    <rect x={x - 5} y={y - 4} width={w + 10} height={h + 8} rx={rx + 4} fill="none" stroke={RED} />
    <rect x={x} y={y} width={w} height={h} rx={rx} fill={RED} />
  </g>
);

const Label = ({ x, y, v, c = YEL, up, s = 26 }: { x: number; y: number; v: string; c?: string; up?: boolean; s?: number }) => (
  <text x={x} y={y} fill={c} fontSize={s} transform={up ? `rotate(-90 ${x} ${y})` : undefined}>{v}</text>
);

const roundPads = [
  [420, 354, "1", 1], [424, 412, "1", 1], [424, 455, "2", 0], [412, 812, "1", 1], [412, 864, "1", 1], [412, 905, "1", 1],
  [473, 905, "1", 1], [554, 905, "2", 0], [473, 851, "1", 1], [554, 851, "2", 1], [617, 947, "1", 1],
  [1316, 555, "2", 0], [1316, 658, "2", 0], [1244, 535, "1", 1], [1244, 658, "2", 0],
  [916, 953, "2", 0], [977, 953, "2", 0], [412, 960, "", 0], [453, 960, "", 0], [492, 960, "", 0], [889, 851, "", 0], [1003, 851, "", 0], [823, 851, "", 0], [1224, 966, "", 0],
] as const;
const icPads = [[1028, 247, "2"], [1069, 247, "3"], [1110, 247, "4"], [412, 514, "7"], [452, 514, "6"], [412, 637, "2"], [452, 637, "3"]] as const;

const Board = () => (
  <svg viewBox="394 176 954 778" preserveAspectRatio="xMidYMid slice" className="absolute inset-0 h-full w-full font-[Lato,sans-serif]">
    <defs>
      <pattern id="dots" width="8.1" height="8.1" x="412" y="176" patternUnits="userSpaceOnUse"><rect width="1" height="1" fill="#9fb2cf" opacity=".35" /></pattern>
      <pattern id="dotsMajor" width="81" height="81" x="412" y="215" patternUnits="userSpaceOnUse"><rect width="2" height="2" fill="#cfd6e4" opacity=".6" /></pattern>
    </defs>
    <rect x="394" y="176" width="954" height="778" fill="#3c5f94" />
    <g fill="none" strokeLinejoin="round" strokeLinecap="round">
      {tracks.map((p) => <polyline key={p} points={p} stroke={DARK} strokeWidth="26" />)}
    </g>
    <g fill={DARK}>
      {roundPads.map(([x, y]) => <circle key={`${x}-${y}`} cx={x} cy={y} r="18" />)}
      {icPads.map(([x, y]) => <rect key={`${x}-${y}`} x={x - 19} y={y - 27} width="38" height="54" rx="19" />)}
      <rect x="967" y="221" width="165" height="54" rx="8" /><rect x="485" y="170" width="54" height="40" rx="6" /><rect x="508" y="243" width="50" height="50" rx="6" />
      <rect x="592" y="190" width="44" height="30" rx="6" /><rect x="630" y="168" width="46" height="76" rx="8" />
      <rect x="1197" y="321" width="52" height="55" rx="9" /><rect x="394" y="485" width="56" height="20" />
      <path d="M755 890h56v64h-56zM1044 890h56v64h-56zM935 905h60v50h-60z" />
      <path d="M660 840h36l-30 36zM840 840h180v18H840z" />
    </g>
    <path d="M1069 215v60M1223 314v66M1192 348h62" stroke="#3c5f94" strokeWidth="8" />
    <path d="M400 540h42v70h-42z" fill="#3c5f94" />
    <g fill="none" stroke={COPPER} strokeWidth="9" strokeLinejoin="round">
      {tracks.map((p) => <polyline key={p} points={p} />)}
    </g>
    <g fill={COPPER}>
      <path d="M549 252l18 9v13l-18 9zM413 420h22l-7 14 7 14h-22l6-14zM1100 262h20l-5 22h-9zM1229 529l-16 3v7l16 3zM1307 545l5-14h8l5 14zM1232 650l8-17h8l8 17zM494 186l-12-7v14zM427 899l14 3v6l-14 3zM458 899l-14 3v6l14 3z" />
    </g>
    <rect x="394" y="176" width="954" height="778" fill="url(#dots)" />
    <rect x="394" y="176" width="954" height="778" fill="url(#dotsMajor)" />

    {/* fabrication layer */}
    <g fill="none" stroke={FAB} strokeWidth="1.5">
      <path d="M446 268h24M458 256v24M1211 273h24M1223 261v24M1188 176v130h71V176M966 222l8 14h157V176M394 525h56M394 627h56M474 887v37h79v-37z" />
    </g>
    <Label x={387} y={195} v="101" c={FAB} /><Label x={390} y={222} v=".7uF" c={FAB} s={25} /><Label x={397} y={277} v="102" c={FAB} />
    <Label x={697} y={243} v="78L05" c={FAB} up /><Label x={1057} y={216} v="U1C" c={FAB} up /><Label x={1156} y={235} v="ICL76" c={FAB} up />
    <Label x={1233} y={258} v="C103" c={FAB} up /><Label x={1287} y={257} v="10uF" c={FAB} up /><Label x={441} y={607} v="U301" c={FAB} up />
    <Label x={1222} y={627} v="220K" c={FAB} up /><Label x={1252} y={627} v="R310" c={FAB} up /><Label x={724} y={953} v="SA92" c={FAB} up />
    <Label x={484} y={913} v="C203" c={FAB} /><Label x={484} y={862} v="C201" c={FAB} /><Label x={482} y={953} v="4.7nF" c={FAB} /><Label x={714} y={886} v="1N4148" c={FAB} />

    {/* silkscreen */}
    <g fill="none" stroke={YEL} strokeWidth="3">
      <path d="M439 176v32" strokeWidth="6" /><path d="M394 209h59v-33M454 186h40M394 230h53l11 12 11-12h25v53M494 268h23M394 305h60M394 354h13M395 395v78M395 412h13M395 455h13" strokeWidth="2.5" />
      <path d="M673 176v58a42 42 0 1 1-58-58" />
      <path d="M966 176v46h166v-46M975 176c8 6 8 14-1 22" strokeWidth="2.5" />
      <path d="M1185 176v86l13 11-13 13v24h77v-24l-13-13 13-11V176M1223 310v22M1185 326h16" strokeWidth="2.5" />
      <path d="M394 539h56M394 613h56" strokeWidth="2" />
      <path d="M1229 565h30v62h-30zM1244 547v18M1244 627v18M1328 555h18M1346 540v32M1328 658h18M1346 641v33" strokeWidth="2.5" />
      <path d="M471 889v-6h85v6M471 921v6h85v-6M471 866v7h85v-7M728 852v9h70v-9M914 848v8h64v-8M394 812h10M394 864h10M394 905h10" />
      <path d="M742 960a42 42 0 1 1 80 0M1029 960a42 42 0 1 1 80 0" />
    </g>
    <g fill="none" stroke={RED} strokeWidth="10" strokeLinejoin="round">
      <path d="M808 290l92-88h133l32-32M394 772h60" /><path d="M890 845l-38 39h-82l-25 24v24l16 15" strokeWidth="8" /><path d="M1338 172a9 9 0 0 0 16 8" strokeWidth="5" />
    </g>
    <Block x={495} y={168} w={35} h={36} /><Block x={517} y={252} w={33} h={34} /><Block x={974} y={228} w={26} h={39} /><Block x={1207} y={332} w={33} h={32} />
    <Block x={642} y={176} w={24} h={19} rx={3} /><Block x={602} y={197} w={29} h={18} rx={3} /><Block x={636} y={217} w={29} h={19} rx={1} />
    <Block x={772} y={904} w={20} h={31} rx={2} /><Block x={752} y={939} w={19} h={24} rx={1} /><Block x={793} y={939} w={19} h={24} rx={1} />
    <Block x={1060} y={900} w={19} h={30} rx={2} /><Block x={1040} y={934} w={19} h={24} rx={1} /><Block x={1081} y={934} w={19} h={24} rx={1} />
    <Block x={686} y={840} w={26} h={16} />
    {icPads.map(([x, y, n]) => (
      <g key={`${x}-${y}`}>
        <Block x={x - 13} y={y - 20} w={26} h={40} rx={13} /><Hole x={x} y={y} />
        <Label x={x - 3} y={y + 3} v={n} c={NUM} up s={12} />
      </g>
    ))}
    {roundPads.map(([x, y, n, cross]) => <Pad key={`${x}-${y}`} x={x} y={y} n={n} cross={cross === 1} />)}
    <Hole x={512} y={186} r={9} cross /><Hole x={533} y={268} r={8} cross /><Hole x={986} y={247} cross /><Hole x={1223} y={348} r={8} cross />
    <Hole x={644} y={186} /><Hole x={622} y={206} /><Hole x={644} y={227} cross />
    <Hole x={782} y={926} /><Hole x={761} y={947} cross /><Hole x={803} y={947} /><Hole x={1069} y={921} /><Hole x={1049} y={942} cross /><Hole x={1090} y={942} />
    <g fill={NUM} fontSize="12" textAnchor="middle">
      <text x="512" y="201">+12V</text><text x="512" y="184">1</text><text x="533" y="282">VCC</text><text x="533" y="266">1</text>
      <text x="1223" y="363">GND</text><text x="1223" y="346">1</text><text x="651" y="194" fontSize="8">+12V</text><text x="617" y="214" fontSize="8">GND</text><text x="650" y="235" fontSize="8">VCC</text>
      <text x="554" y="915" fontSize="7">GND</text>
    </g>
    <Label x={1080} y={257} v="GND" c={NUM} up s={10} /><Label x={991} y={252} v="1" c={NUM} up s={17} />

    <Label x={504} y={228} v="K" s={25} /><Label x={580} y={237} v="U101" up /><Label x={957} y={217} v="U1C" up />
    <Label x={1177} y={258} v="C103" up /><Label x={905} y={280} v="C105" /><Label x={397} y={330} v="102" />
    <Label x={1210} y={627} v="R309" up /><Label x={1282} y={627} v="R310" up /><Label x={446} y={893} v="R202" up />
    <Label x={383} y={791} v="201" /><Label x={569} y={913} v="C203" /><Label x={569} y={862} v="C201" /><Label x={686} y={880} v="K" />
    <Label x={750} y={881} v="Q201" /><Label x={916} y={881} v="R204" /><Label x={1038} y={879} v="Q202" /><Label x={951} y={934} v="D203" />

    {/* courtyards */}
    <path
      fill="none"
      stroke={MAG}
      d="M394 211.5h141V176M394 227.5h159V290M394 308.5h60M594.5 170v80h81v-80M394 337.5h41.5v34H394M394 395.5h45.5v33H394M394 438.5h45.5v33H394M394 490.5h56M394 661.5h56M963.5 176v94h171v-94M1183.5 170v198h81V170M1227.5 519.5h34v155h-34zM1348 538.5h-47.5v34H1348M1348 641.5h-47.5v34H1348M1189.5 519v155M394 795.5h33.5v34H394M394 847.5h33.5v34H394M394 888.5h33.5v33H394M456.5 880.5h115v49h-115zM456.5 850v25h115v-25M394 942.5h124.5v12M599.5 931.5h35v30h-35zM682.5 850v13h157v-13M737.5 896.5h88v60h-88zM870.5 850v10h152v-10M1025.5 892.5h88v64h-88zM895.5 939.5h40v20h-40zM957.5 939.5h41v20h-41zM1206.5 951.5h34v10h-34z"
    />
  </svg>
);

/* ---------- dialog ---------- */

const tree: [string, number][] = [
  ["Слои редактора", 1], ["Структура платы", 1], ["Обработка платы", 1], ["Паяльная маска/паста", 1], ["Смещения штриховки зоны", 1],
  ["Текст и графика", 0], ["По умолчанию", 1], ["Форматирование", 1], ["Текстовые переменные", 1],
  ["Правила проектирования", 0], ["Ограничения", 1], ["Предустановленные размеры", 1], ["Каплевидные переходы", 1],
  ["Паттерны настройки длины", 1], ["Профили подстройки", 1], ["Классы цепей", 1], ["Классы компонентов", 1], ["Особые правила", 1],
  ["Уровни нарушений", 1], ["Данные платы", 0], ["Внедренные файлы", 1],
];

const NOT_COPPER = "На плате, не медь";
const layerRows: { name: string; kind: string; locked?: boolean; select?: boolean }[] = [
  { name: "F.Courtyard", kind: "Вне платы,", locked: true },
  { name: "F.Fab", kind: "Вне платы, производственный" },
  { name: "F.Adhesive", kind: NOT_COPPER },
  { name: "F.Paste", kind: NOT_COPPER },
  { name: "F.Silkscreen", kind: NOT_COPPER },
  { name: "F.Mask", kind: NOT_COPPER },
  { name: "top_copper", kind: "питание", locked: true, select: true },
  { name: "bottom_copper", kind: "сигнальный", locked: true, select: true },
  { name: "B.Mask", kind: NOT_COPPER },
  { name: "B.Silkscreen", kind: NOT_COPPER },
  { name: "B.Paste", kind: NOT_COPPER },
  { name: "B.Adhesive", kind: NOT_COPPER },
  { name: "B.Fab", kind: "Вне платы, производственный" },
  { name: "B.Courtyard", kind: "Вне платы, тестовый", locked: true },
  { name: "Edge.Cuts", kind: "Контур платы", locked: true },
  { name: "Margin", kind: "О", locked: true },
];

const Btn = ({ children, className = "" }: { children: ReactNode; className?: string }) => (
  <button type="button" className={`h-[27px] shrink-0 rounded-[3px] border bg-[#323232] text-[#f0f0f0] ${className}`}>{children}</button>
);

const Grip = () => (
  <svg width="10" height="10" viewBox="0 0 10 10" fill="#cfcfcf" className="absolute right-0 bottom-0"><path d="M7 0h2v2H7zM4 3h2v2H4zM7 3h2v2H7zM1 6h2v2H1zM4 6h2v2H4zM7 6h2v2H7z" /></svg>
);

const BoardSetup = () => (
  <div role="dialog" aria-label="Параметры платы" className="relative flex h-[571px] w-[741px] flex-col overflow-hidden rounded-lg border-2 border-[#0078d7] bg-[#1f1f1f] shadow-[0_16px_40px_8px_rgba(0,0,0,0.5)]">
    <header className="flex h-8 shrink-0 items-center justify-between bg-[#0078d7] pr-3 pl-[7px] text-white">
      Параметры платы
      <button type="button" aria-label="Закрыть"><svg width="12" height="12" viewBox="0 0 12 12" stroke="#fff" strokeWidth="1.2"><path d="M.5.5l11 11M11.5.5l-11 11" /></svg></button>
    </header>
    <p className="flex h-[39px] shrink-0 items-center gap-[7px] pl-[5px]"><Warn />Проект отсутствует или доступен только для чтения. Некоторые настройки нельзя будет изменить.</p>
    <div className="flex min-h-0 flex-1">
      <ul className="grid h-[454px] w-[253px] shrink-0 auto-rows-fr">
        {tree.map(([label, level], i) => (
          <li key={label} className={`flex items-center whitespace-nowrap ${level ? "pl-[47px]" : "gap-[8px] pl-[5px]"} ${i === 0 ? "bg-[#313131] text-[#ececec]" : ""}`}>
            {level === 0 && <svg width="12" height="8" viewBox="0 0 12 8" fill="none" stroke="#fff" strokeWidth="1.8" className="shrink-0"><path d="M1 1l5 5 5-5" /></svg>}
            {label}
          </li>
        ))}
      </ul>
      <div className="flex w-5 shrink-0 justify-center bg-[#181818] pt-10"><i className="h-[400px] w-[2px] rounded bg-[#9b9b9b]" /></div>
      <div className="flex min-w-0 flex-1 flex-col pl-2">
        <Btn className="mt-[8px] mr-[8px] w-[245px] self-end border-[#6a6a6a]">Добавить пользовательский слой...</Btn>
        <i className="mt-1 mr-1 h-[2px] shrink-0 bg-[#a0a0a0]" />
        <div className="mt-[2px] flex min-h-0 flex-1">
          <div className="flex-1 overflow-hidden">
            {layerRows.map((row) => (
              <div key={row.name} className="flex h-[27px] items-center">
                <Check label={`Использовать ${row.name}`} hideLabel on disabled={row.locked} />
                <input aria-label="Имя слоя" defaultValue={row.name} className="mr-[10px] ml-[10px] h-[25px] w-[163px] border border-[#4c4c4c] bg-[#1f1f1f] px-1 pb-[2px] text-[#cfcfcf]" />
                {row.select ? <Select label={`Тип ${row.name}`} value={row.kind} className="w-[233px]" /> : <span className="pl-1">{row.kind}</span>}
              </div>
            ))}
          </div>
          <div className="flex w-5 shrink-0 justify-center bg-[#181818] pt-5"><i className="h-[287px] w-[2px] rounded bg-[#9b9b9b]" /></div>
        </div>
      </div>
    </div>
    <footer className="flex h-9 shrink-0 items-center gap-2 border-t border-[#3d3d3d] pr-[8px] pl-[7px]">
      <Btn className="mr-auto w-[252px] border-[#6a6a6a]">Импорт настроек из другой платы...</Btn>
      <Btn className="w-[87px] border-[#b4b4b4]">OK</Btn>
      <Btn className="w-[87px] border-[#6a6a6a]">Отмена</Btn>
    </footer>
    <Grip />
  </div>
);

/* ---------- window ---------- */

const menu = ["Файл", "Правка", "Вид", "Разместить", "Трассировка", "Проверка", "Инструменты", "Настройки", "Справка"];

const info: [string, ReactNode, string][] = [
  ["Тип", "Дорожка", "w-[95px]"], ["Цепь", "Net-(D304-K)", "w-[117px]"], ["Разрешенный класс цепи", "Default", "w-[195px]"],
  ["Слой", "bottom_copper", "w-[131px]"], ["Ширина", "0,4000 mm", "w-[107px]"], ["Длина сегмента", "1,4368 mm", "w-[134px]"],
  ["Длина на плате", "22,2750 mm", "w-[131px]"], ["Медная область", <>0,69 mm<sup className="text-[9px]">2</sup></>, "w-[137px]"],
  ["Мин. зазор: 0,3000 mm", "()", "w-[184px]"], ["Ограничения ширины: min 0,2032 mm; opt 0,4000 mm", "(класс цепей 'Default')", "flex-1"],
];

export default function App() {
  return (
    <div className="h-screen bg-[#b4b6b4] p-[2px] font-['Noto_Sans',sans-serif] text-[13px] text-[#c8c8c8]">
      <div className="relative flex h-full flex-col overflow-hidden rounded-t-lg bg-[#323232]">
        <header className="flex h-8 shrink-0 items-center bg-[#1f1f1f] pl-2 text-[#8a8a8a]">
          <svg width="19" height="19" viewBox="0 0 24 24" fill="none" className="mr-[7px]">
            <BoardArt /><circle cx="20" cy="9" r="1.5" fill={ORANGE} /><circle cx="20" cy="15" r="1.5" fill={ORANGE} /><circle cx="18" cy="20" r="1.5" fill={ORANGE} />
          </svg>
          *complex_hierarchy [Только чтение] — Редактор печатных плат
          <span className="mr-[20px] ml-auto flex items-center gap-[42px]">
            <button type="button" aria-label="Свернуть"><svg width="12" height="12" stroke="#8a8a8a"><path d="M0 6.5h12" /></svg></button>
            <button type="button" aria-label="Развернуть"><svg width="12" height="12" stroke="#8a8a8a" fill="none"><rect x=".5" y=".5" width="11" height="11" rx="1" /></svg></button>
            <button type="button" aria-label="Закрыть окно"><svg width="12" height="12" stroke="#8a8a8a"><path d="M.5.5l11 11M11.5.5l-11 11" /></svg></button>
          </span>
        </header>
        <nav className="flex h-6 shrink-0 items-center gap-[17px] bg-[#2b2b2b] pt-[2px] pl-[7px] text-[#6b6b6b]">
          {menu.map((m) => <button key={m} type="button">{m}</button>)}
        </nav>
        <MainToolbar />
        <AuxToolbar />
        <main className="flex min-h-0 flex-1">
          <PropertiesPanel />
          <LeftToolbar />
          <section className="flex min-w-0 flex-1 flex-col">
            <div className="flex h-[38px] shrink-0 items-center gap-[7px] bg-[#1f1f1f] pr-[5px] pl-[6px]">
              <Warn />Файл платы доступен только для чтения.
              <button type="button" aria-label="Закрыть сообщение" className="ml-auto">
                <svg width="18" height="18" viewBox="0 0 18 18"><rect width="18" height="18" fill="#e9c3bb" /><rect x="1" y="1" width="16" height="16" fill="#c5543f" /><path d="M5 5l8 8M13 5l-8 8" stroke="#444" strokeWidth="4.5" /><path d="M5 5l8 8M13 5l-8 8" stroke="#fff" strokeWidth="3" /></svg>
              </button>
            </div>
            <div className="relative flex-1 overflow-hidden"><Board /></div>
          </section>
          <RightToolbar />
          <AppearancePanel />
        </main>
        <div className="flex h-[39px] shrink-0 items-center bg-[#323232] pt-[2px] pl-[13px] text-[#666666]">
          {info.map(([head, value, width]) => (
            <div key={head} className={`shrink-0 leading-[19px] whitespace-nowrap ${width}`}>
              <p>{head}</p>
              <p>{value}</p>
            </div>
          ))}
        </div>
        <footer className="flex h-[25px] shrink-0 items-center bg-black pt-[2px] text-sm whitespace-nowrap">
          <span className="w-[401px] pl-[202px]">Z 5,86</span>
          <span className="w-[200px]">X 110,0000&nbsp; Y 95,0000</span>
          <span className="w-[397px]">dx 110,0000&nbsp; dy 95,0000&nbsp; dist...&nbsp; сетка 0,5000</span>
          <span>мм</span>
          <i className="mr-[10px] ml-auto h-[18px] w-[6px] bg-[#1c1c1c]" />
          <i className="h-5 w-5 bg-[#1c1c1c]" />
        </footer>
        <Grip />
        <div className="pointer-events-none absolute inset-0 flex items-start justify-center pt-[280px]">
          <div className="pointer-events-auto"><BoardSetup /></div>
        </div>
      </div>
    </div>
  );
}
